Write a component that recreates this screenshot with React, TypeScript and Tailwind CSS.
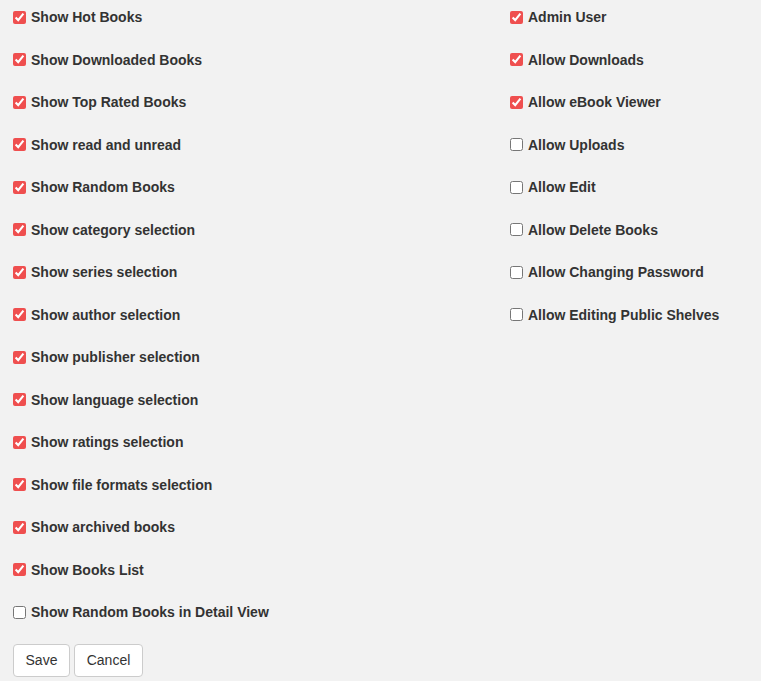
const leftOptions: [string, boolean][] = [
  ["Show Hot Books", true],
  ["Show Downloaded Books", true],
  ["Show Top Rated Books", true],
  ["Show read and unread", true],
  ["Show Random Books", true],
  ["Show category selection", true],
  ["Show series selection", true],
  ["Show author selection", true],
  ["Show publisher selection", true],
  ["Show language selection", true],
  ["Show ratings selection", true],
  ["Show file formats selection", true],
  ["Show archived books", true],
  ["Show Books List", true],
  ["Show Random Books in Detail View", false],
];

const rightOptions: [string, boolean][] = [
  ["Admin User", true],
  ["Allow Downloads", true],
  ["Allow eBook Viewer", true],
  ["Allow Uploads", false],
  ["Allow Edit", false],
  ["Allow Delete Books", false],
  ["Allow Changing Password", false],
  ["Allow Editing Public Shelves", false],
];

const Option = ({ label, checked }: { label: string; checked: boolean }) => (
  <label className="flex h-[20px] items-center font-bold text-[14px] leading-[20px] text-[#333]">
    <input
      type="checkbox"
      defaultChecked={checked}
      className="m-0 mr-[5px] h-[13px] w-[13px] accent-[#ef4f4f]"
    />
    {label}
  </label>
);

const App = () => {
  return (
    <div
      className="min-h-[681px] bg-[#f2f2f2] pt-[7px] text-[#333]"
      style={{ fontFamily: '"Liberation Sans", Arial, sans-serif' }}
    >
      <div className="flex">
        <div className="flex w-[510px] flex-col gap-[22.5px] pl-[13px]">
          {leftOptions.map(([label, checked]) => (
            <Option key={label} label={label} checked={checked} />
          ))}
        </div>
        <div className="flex flex-col gap-[22.5px]">
          {rightOptions.map(([label, checked]) => (
            <Option key={label} label={label} checked={checked} />
          ))}
        </div>
      </div>

      <div className="mt-[22px] flex gap-[4px] pl-[13px]">
        <button className="h-[33px] w-[57px] rounded-[4px] border border-[#ccc] bg-white pb-[2px] text-[14px] leading-[20px] text-[#333]">
          Save
        </button>
        <button className="h-[33px] w-[69px] rounded-[4px] border border-[#ccc] bg-white pb-[2px] text-[14px] leading-[20px] text-[#333]">
          Cancel
        </button>
      </div>
    </div>
  );
};

export default App;
